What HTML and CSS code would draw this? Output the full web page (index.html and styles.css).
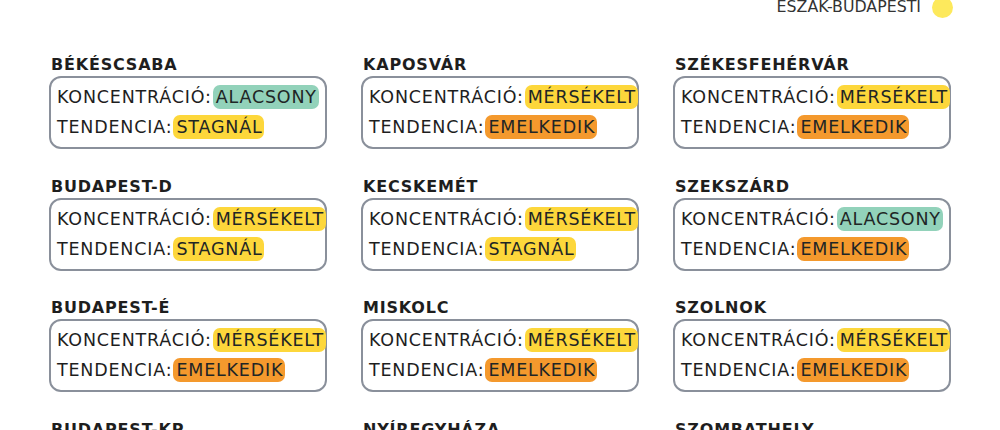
FILE: index.html
```html
<!DOCTYPE html>
<html lang="hu">
<head>
<meta charset="utf-8">
<title>Régiók</title>
<link rel="stylesheet" href="styles.css">
</head>
<body>
<div class="legend">
  <span class="legend-label">ÉSZAK-BUDAPESTI</span>
  <span class="legend-dot"></span>
</div>
<div class="grid">
  <div class="card">
    <div class="city">BÉKÉSCSABA</div>
    <div class="box">
      <div class="line">KONCENTRÁCIÓ:<span class="tag low">ALACSONY</span></div>
      <div class="line">TENDENCIA:<span class="tag mid">STAGNÁL</span></div>
    </div>
  </div>
  <div class="card">
    <div class="city">KAPOSVÁR</div>
    <div class="box">
      <div class="line">KONCENTRÁCIÓ:<span class="tag mid">MÉRSÉKELT</span></div>
      <div class="line">TENDENCIA:<span class="tag up">EMELKEDIK</span></div>
    </div>
  </div>
  <div class="card">
    <div class="city">SZÉKESFEHÉRVÁR</div>
    <div class="box">
      <div class="line">KONCENTRÁCIÓ:<span class="tag mid">MÉRSÉKELT</span></div>
      <div class="line">TENDENCIA:<span class="tag up">EMELKEDIK</span></div>
    </div>
  </div>
  <div class="card">
    <div class="city">BUDAPEST-D</div>
    <div class="box">
      <div class="line">KONCENTRÁCIÓ:<span class="tag mid">MÉRSÉKELT</span></div>
      <div class="line">TENDENCIA:<span class="tag mid">STAGNÁL</span></div>
    </div>
  </div>
  <div class="card">
    <div class="city">KECSKEMÉT</div>
    <div class="box">
      <div class="line">KONCENTRÁCIÓ:<span class="tag mid">MÉRSÉKELT</span></div>
      <div class="line">TENDENCIA:<span class="tag mid">STAGNÁL</span></div>
    </div>
  </div>
  <div class="card">
    <div class="city">SZEKSZÁRD</div>
    <div class="box">
      <div class="line">KONCENTRÁCIÓ:<span class="tag low">ALACSONY</span></div>
      <div class="line">TENDENCIA:<span class="tag up">EMELKEDIK</span></div>
    </div>
  </div>
  <div class="card">
    <div class="city">BUDAPEST-É</div>
    <div class="box">
      <div class="line">KONCENTRÁCIÓ:<span class="tag mid">MÉRSÉKELT</span></div>
      <div class="line">TENDENCIA:<span class="tag up">EMELKEDIK</span></div>
    </div>
  </div>
  <div class="card">
    <div class="city">MISKOLC</div>
    <div class="box">
      <div class="line">KONCENTRÁCIÓ:<span class="tag mid">MÉRSÉKELT</span></div>
      <div class="line">TENDENCIA:<span class="tag up">EMELKEDIK</span></div>
    </div>
  </div>
  <div class="card">
    <div class="city">SZOLNOK</div>
    <div class="box">
      <div class="line">KONCENTRÁCIÓ:<span class="tag mid">MÉRSÉKELT</span></div>
      <div class="line">TENDENCIA:<span class="tag up">EMELKEDIK</span></div>
    </div>
  </div>
  <div class="card">
    <div class="city">BUDAPEST-KP</div>
    <div class="box">
      <div class="line">KONCENTRÁCIÓ:<span class="tag mid">MÉRSÉKELT</span></div>
      <div class="line">TENDENCIA:<span class="tag up">EMELKEDIK</span></div>
    </div>
  </div>
  <div class="card">
    <div class="city">NYÍREGYHÁZA</div>
    <div class="box">
      <div class="line">KONCENTRÁCIÓ:<span class="tag mid">MÉRSÉKELT</span></div>
      <div class="line">TENDENCIA:<span class="tag up">EMELKEDIK</span></div>
    </div>
  </div>
  <div class="card">
    <div class="city">SZOMBATHELY</div>
    <div class="box">
      <div class="line">KONCENTRÁCIÓ:<span class="tag mid">MÉRSÉKELT</span></div>
      <div class="line">TENDENCIA:<span class="tag up">EMELKEDIK</span></div>
    </div>
  </div>
</div>
</body>
</html>
```

FILE: styles.css
```css
html, body {
  margin: 0;
  padding: 0;
  background: #ffffff;
}

body {
  font-family: "DejaVu Sans", "Liberation Sans", sans-serif;
  color: #1e1e1e;
  overflow: hidden;
}

.legend {
  display: flex;
  justify-content: flex-end;
  align-items: center;
  gap: 11px;
  padding-right: 47px;
  margin-top: -4px;
  height: 22px;
}

.legend-label {
  font-size: 15.8px;
  line-height: 16px;
  color: #333333;
}

.legend-dot {
  width: 21px;
  height: 21px;
  border-radius: 50%;
  background: #fde95c;
}

.grid {
  display: grid;
  grid-template-columns: repeat(3, 278px);
  column-gap: 34px;
  row-gap: 27.5px;
  padding-left: 49px;
  padding-top: 37px;
}

.city {
  font-weight: 700;
  font-size: 16px;
  line-height: 20px;
  padding-left: 2px;
  margin-bottom: 1px;
  letter-spacing: 0.8px;
  color: #1e1e1e;
}

.box {
  border: 2px solid #8a909b;
  border-radius: 12px;
  padding: 4px 0 4px 6px;
  height: 61px;
  white-space: nowrap;
}

.line {
  font-size: 17.5px;
  line-height: 30px;
  height: 30px;
  display: flex;
  align-items: center;
  letter-spacing: 0.8px;
}

.tag {
  margin-left: 1px;
  padding: 0 2px 0 3px;
  border-radius: 7px;
  line-height: 24px;
  height: 24px;
  color: #1f2626;
}

.low { background: #92d2ba; }
.mid { background: #fdd73b; }
.up { background: #f4992d; }
```
